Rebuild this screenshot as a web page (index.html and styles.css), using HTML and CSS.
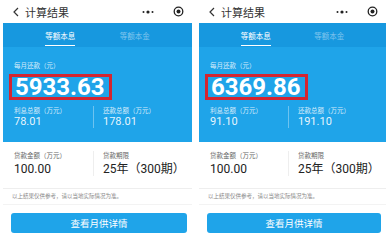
FILE: index.html
```html
<!DOCTYPE html>
<html lang="zh">
<head>
<meta charset="utf-8">
<link rel="stylesheet" href="styles.css">
</head>
<body>
<div class="page">
  <section class="phone phone--left">
    <header class="nav">
      <svg class="nav-back" width="8" height="10" viewBox="0 0 8 10"><path d="M6 1 L2 5 L6 9" fill="none" stroke="#333" stroke-width="1.2"/></svg>
      <span class="nav-title">计算结果</span>
      <span class="nav-actions">
        <svg width="14" height="6" viewBox="0 0 14 6"><circle cx="2.5" cy="3" r="1" fill="#222"/><circle cx="7" cy="3" r="1.6" fill="#222"/><circle cx="11.5" cy="3" r="1" fill="#222"/></svg>
        <svg width="11" height="11" viewBox="0 0 11 11"><circle cx="5.5" cy="5.5" r="4.3" fill="none" stroke="#222" stroke-width="1.3"/><circle cx="5.5" cy="5.5" r="2" fill="#222"/></svg>
      </span>
    </header>
    <div class="card">
      <div class="tabs">
        <div class="tab tab--active">等额本息</div>
        <div class="tab">等额本金</div>
      </div>
      <div class="card-body">
        <div class="lbl">每月还款（元）</div>
        <div class="big"><span class="big-num">5933.63</span></div>
        <div class="split">
          <div class="col">
            <div class="lbl">利息总额（万元）</div>
            <div class="val">78.01</div>
          </div>
          <div class="col col--right">
            <div class="lbl">还款总额（万元）</div>
            <div class="val">178.01</div>
          </div>
        </div>
      </div>
    </div>
    <div class="info">
      <div class="col">
        <div class="info-lbl">贷款金额（万元）</div>
        <div class="info-val">100.00</div>
      </div>
      <div class="col col--right">
        <div class="info-lbl">贷款期限</div>
        <div class="info-val">25年（300期）</div>
      </div>
    </div>
    <div class="notice">以上结果仅供参考，请以当地实际情况为准。</div>
    <div class="btn">查看月供详情</div>
  </section>

  <section class="phone phone--right">
    <header class="nav">
      <svg class="nav-back" width="8" height="10" viewBox="0 0 8 10"><path d="M6 1 L2 5 L6 9" fill="none" stroke="#333" stroke-width="1.2"/></svg>
      <span class="nav-title">计算结果</span>
      <span class="nav-actions">
        <svg width="14" height="6" viewBox="0 0 14 6"><circle cx="2.5" cy="3" r="1" fill="#222"/><circle cx="7" cy="3" r="1.6" fill="#222"/><circle cx="11.5" cy="3" r="1" fill="#222"/></svg>
        <svg width="11" height="11" viewBox="0 0 11 11"><circle cx="5.5" cy="5.5" r="4.3" fill="none" stroke="#222" stroke-width="1.3"/><circle cx="5.5" cy="5.5" r="2" fill="#222"/></svg>
      </span>
    </header>
    <div class="card">
      <div class="tabs">
        <div class="tab tab--active">等额本息</div>
        <div class="tab">等额本金</div>
      </div>
      <div class="card-body">
        <div class="lbl">每月还款（元）</div>
        <div class="big"><span class="big-num">6369.86</span></div>
        <div class="split">
          <div class="col">
            <div class="lbl">利息总额（万元）</div>
            <div class="val">91.10</div>
          </div>
          <div class="col col--right">
            <div class="lbl">还款总额（万元）</div>
            <div class="val">191.10</div>
          </div>
        </div>
      </div>
    </div>
    <div class="info">
      <div class="col">
        <div class="info-lbl">贷款金额（万元）</div>
        <div class="info-val">100.00</div>
      </div>
      <div class="col col--right">
        <div class="info-lbl">贷款期限</div>
        <div class="info-val">25年（300期）</div>
      </div>
    </div>
    <div class="notice">以上结果仅供参考，请以当地实际情况为准。</div>
    <div class="btn">查看月供详情</div>
  </section>
</div>
</body>
</html>
```

FILE: styles.css
```css
* { box-sizing: border-box; }
html, body { margin: 0; padding: 0; background: #fff; }
body {
  width: 390px;
  height: 240px;
  overflow: hidden;
  font-family: "Noto Sans CJK SC", "Noto Sans", sans-serif;
}
.page {
  display: flex;
  gap: 2px;
}
.phone {
  width: 194px;
  height: 240px;
  display: flex;
  flex-direction: column;
  background: #fff;
}
.phone--left { padding: 0 2px 0 3px; }
.phone--right { padding: 0 4px 0 3px; }

.nav {
  height: 23px;
  display: flex;
  align-items: center;
  padding: 0 8px 0 9px;
}
.nav-back { flex: none; }
.nav-title {
  margin-left: 5px;
  font-size: 11px;
  color: #333;
  flex: 1;
}
.nav-actions {
  display: flex;
  align-items: center;
  gap: 18px;
}

.card {
  background: #1fa4e9;
  height: 119px;
  display: flex;
  flex-direction: column;
}
.tabs {
  display: flex;
  height: 24px;
  background: #1798df;
  padding: 0 20px;
}
.tab {
  flex: 1;
  display: flex;
  align-items: center;
  justify-content: center;
  font-size: 7.5px;
  color: rgba(255,255,255,0.45);
  position: relative;
}
.tab--active { color: #fff; }
.tab--active::after {
  content: "";
  position: absolute;
  bottom: 1px;
  left: 50%;
  width: 30px;
  margin-left: -15px;
  height: 1.5px;
  background: #fff;
}
.card-body {
  padding: 14px 10px 0 11px;
  display: flex;
  flex-direction: column;
}
.lbl {
  font-size: 6.5px;
  line-height: 9px;
  color: rgba(255,255,255,0.8);
}
.big {
  margin: 4px 0 0 -5px;
}
.big-num {
  display: inline-block;
  border: 3px solid #d42530;
  padding: 0 4px 0 3px;
  height: 26px;
  line-height: 20px;
  font-family: Roboto, "Liberation Sans", sans-serif;
  font-weight: 700;
  font-size: 24px;
  color: #fff;
}
.split {
  display: flex;
  margin-top: 6px;
}
.col { flex: 1; }
.col--right {
  border-left: 1px solid rgba(255,255,255,0.35);
  padding-left: 9px;
}
.val {
  font-family: Roboto, "Liberation Sans", sans-serif;
  font-size: 11px;
  line-height: 13px;
  color: rgba(255,255,255,0.9);
}

.info {
  display: flex;
  padding: 9px 10px 12px 11px;
  border-bottom: 1px solid #eee;
}
.info .col--right { border-left: 1px solid #eee; }
.info-lbl {
  font-size: 6.5px;
  line-height: 9px;
  color: #666;
}
.info-val {
  margin-top: 2px;
  font-family: Roboto, "Noto Sans CJK SC", sans-serif;
  font-size: 12px;
  line-height: 14px;
  color: #222;
}
.notice {
  font-size: 5.5px;
  line-height: 15px;
  color: #888;
  padding-left: 9px;
  border-bottom: 1px solid #f3f3f3;
}
.btn {
  margin: 8px 5px 0 8px;
  height: 20px;
  border-radius: 3px;
  background: #1fa4e9;
  color: #fff;
  font-size: 9.5px;
  display: flex;
  align-items: center;
  justify-content: center;
}
```
